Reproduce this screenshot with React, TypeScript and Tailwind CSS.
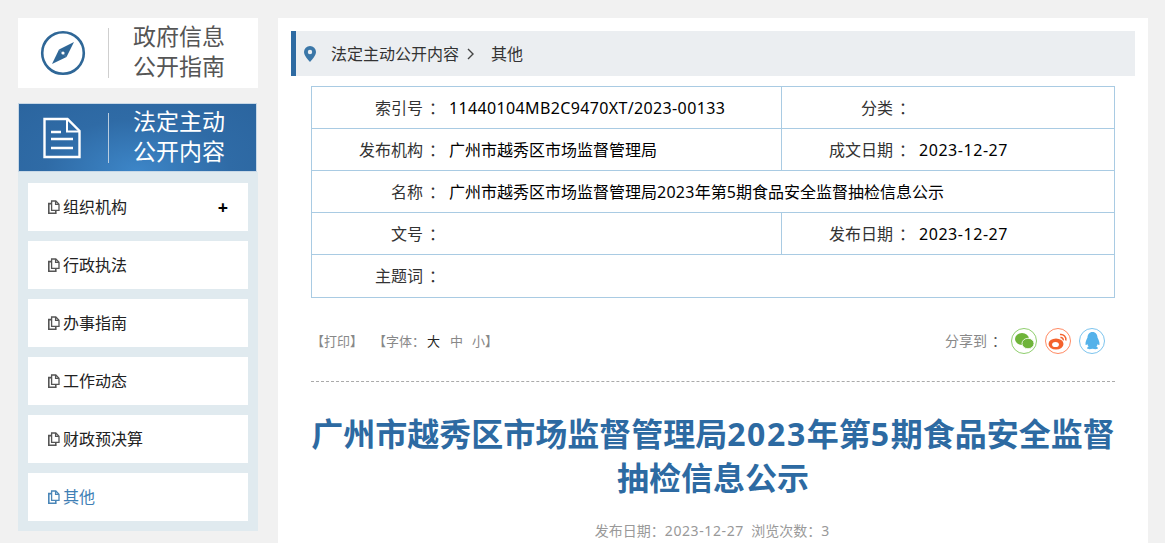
const font = { fontFamily: '"Noto Sans", "Noto Sans CJK SC", sans-serif' };

const navs = ["组织机构", "行政执法", "办事指南", "工作动态", "财政预决算", "其他"];

const CopyIcon = ({ color }: { color: string }) => (
  <svg width="12" height="14" viewBox="0 0 12 14" fill="none" stroke={color} strokeWidth="1.3" className="shrink-0">
    <path d="M3.6 1h4.2L11 4.2V10.4H3.6z" />
    <path d="M7.6 1v3.4H11" />
    <path d="M3.4 3.6H.8v9.6h7V10.6" strokeWidth="1.6" />
  </svg>
);

const Compass = () => (
  <svg width="46" height="46" viewBox="0 0 46 46" fill="none">
    <circle cx="23" cy="23" r="20.8" stroke="#2f6797" strokeWidth="2.6" />
    <path d="M34 12 L26.5 27 L19 19.5 Z" fill="#2f6797" />
    <path d="M12 34 L19 19.5 L26.5 27 Z" fill="#2f6797" />
    <circle cx="23" cy="23" r="1.6" fill="#fff" />
  </svg>
);

const DocIcon = () => (
  <svg width="38" height="42" viewBox="0 0 38 42" fill="none" stroke="#fff" strokeWidth="2.4">
    <path d="M1.500 2h23l12 12v26h-35z" />
    <path d="M24 2v12.500h12.500" strokeWidth="2" />
    <path d="M8 15h10M8 22h22M8 31h22" />
  </svg>
);

const Row = ({ children, last }: { children: React.ReactNode; last?: boolean }) => (
  <div className={`flex h-[42px] items-center ${last ? "" : "border-b border-[#a9cbe3]"}`}>{children}</div>
);

const Label = ({ text }: { text: string }) => (
  <div className="flex w-[127px] shrink-0 justify-end">
    <span>{text}</span>
    <span className="w-4 whitespace-nowrap pl-[6px]">：</span>
  </div>
);

export default function App() {
  return (
    <div className="flex h-[543px] items-start gap-5 overflow-hidden bg-[#f1f1f1] pl-[18px] pt-[18px]" style={font}>
      <div className="w-60 shrink-0">
        <div className="flex h-[70px] items-center bg-white pl-[22px]">
          <Compass />
          <div className="ml-[22px] mr-[24px] h-[50px] w-px bg-[#cfcfcf]" />
          <div className="pb-1 text-[23px] leading-[30px] text-[#555]">政府信息<br />公开指南</div>
        </div>
        <div className="mt-[15px] flex h-[69px] w-[239px] items-center border border-[#c8d8e6] bg-[radial-gradient(ellipse_at_50%_100%,#3d86c8_0%,#2f6ba6_55%,#2b659f_100%)] pl-[24px]">
          <DocIcon />
          <div className="ml-[27px] mr-[24px] h-[50px] w-px bg-[#b9cde0]" />
          <div className="pb-1 text-[23px] leading-[30px] text-white">法定主动<br />公开内容</div>
        </div>
        <div className="flex flex-col gap-[10px] bg-[#e0eaef] px-[10px] pb-[10px] pt-[11px]">
          {navs.map((nav, index) => {
            const active = index === navs.length - 1;
            return (
              <div key={index} className="flex h-12 items-center bg-white px-5 text-base">
                <CopyIcon color={active ? "#4a86b8" : "#555"} />
                <span className={`ml-[4px] -translate-x-px ${active ? "text-[#3f7fb5]" : "text-[#222]"}`}>{nav}</span>
                {index === 0 && <span className="ml-auto text-lg font-bold leading-none text-black">+</span>}
              </div>
            );
          })}
        </div>
      </div>

      <div className="h-[600px] w-[870px] shrink-0 bg-white px-[13px] pt-[13px]">
        <div className="flex h-[45px] items-center border-l-[5px] border-[#2d6aa2] bg-[#ebeef1] pl-[8px] text-base text-[#333]">
          <svg width="12" height="16" viewBox="0 0 12 16" fill="#3b77a8">
            <path fillRule="evenodd" d="M6 0a6 6 0 0 1 6 6c0 3.6-4 7.6-6 10C4 13.6 0 9.6 0 6a6 6 0 0 1 6-6zm0 3.8a2.2 2.2 0 1 0 0 4.4 2.2 2.2 0 0 0 0-4.4z" />
          </svg>
          <span className="ml-[15px]">法定主动公开内容</span>
          <svg width="10" height="12" viewBox="0 0 10 12" fill="none" stroke="#444" strokeWidth="1.4" className="ml-[7px]">
            <path d="M2 1l5 5-5 5" />
          </svg>
          <span className="ml-[15px]">其他</span>
        </div>

        <div className="ml-5 mr-[20px] mt-[10px] border border-[#a9cbe3] text-base text-[#333]">
          <Row>
            <Label text="索引号" />
            <div className="ml-[10px] w-[332px] tracking-[0.36px] text-black">11440104MB2C9470XT/2023-00133</div>
            <div className="flex h-full items-center border-l border-[#a9cbe3]">
              <Label text="分类" />
            </div>
          </Row>
          <Row>
            <Label text="发布机构" />
            <div className="ml-[10px] w-[332px] text-black">广州市越秀区市场监督管理局</div>
            <div className="flex h-full items-center border-l border-[#a9cbe3]">
              <Label text="成文日期" />
              <div className="ml-[10px] tracking-[0.55px] text-black">2023-12-27</div>
            </div>
          </Row>
          <Row>
            <Label text="名称" />
            <div className="ml-[10px] text-black">
              广州市越秀区市场监督管理局<span className="tracking-[0.25px]">2023</span>年第<span className="tracking-[0.25px]">5</span>期食品安全监督抽检信息公示
            </div>
          </Row>
          <Row>
            <Label text="文号" />
            <div className="ml-[10px] w-[332px]" />
            <div className="flex h-full items-center border-l border-[#a9cbe3]">
              <Label text="发布日期" />
              <div className="ml-[10px] tracking-[0.55px] text-black">2023-12-27</div>
            </div>
          </Row>
          <Row last>
            <Label text="主题词" />
          </Row>
        </div>

        <div className="ml-5 mr-[20px] mt-[28px] flex h-[56px] items-start justify-between border-b border-dashed border-[#aaa] text-[13px] text-[#888]">
          <div className="flex h-[32px] items-center">
            <span>【打印】</span>
            <span className="ml-[10px]">【字体：</span>
            <span className="ml-[2px] text-[#222]">大</span>
            <span className="ml-[10px]">中</span>
            <span className="ml-[9px]">小】</span>
          </div>
          <div className="mr-[10px] flex h-[30px] items-center">
            <span className="text-sm">分享到</span>
            <span className="w-[14px] whitespace-nowrap pl-[5px] text-sm text-[#555]">：</span>
            <span className="ml-[10px] flex h-[26px] w-[26px] items-center justify-center rounded-full border border-[#8fce6d]">
              <svg width="19" height="16" viewBox="0 0 19 16" fill="#6fb43a">
                <ellipse cx="7" cy="6" rx="7" ry="6" />
                <ellipse cx="13" cy="10.500" rx="6" ry="5.200" stroke="#fff" strokeWidth="0.8" />
              </svg>
            </span>
            <span className="ml-2 flex h-[26px] w-[26px] items-center justify-center rounded-full border border-[#ff8a63]">
              <svg width="20" height="17" viewBox="0 0 20 17" fill="none">
                <ellipse cx="8" cy="11" rx="7.500" ry="5.500" fill="#f4622d" />
                <ellipse cx="7.500" cy="11.500" rx="3.400" ry="2.600" fill="#fff" />
                <path d="M12 1.500c3.600-.6 6.600 2.400 5.800 6M12.400 4.600c1.800-.3 3.200 1.100 2.800 2.800" stroke="#f4622d" strokeWidth="1.500" />
              </svg>
            </span>
            <span className="ml-2 flex h-[26px] w-[26px] items-center justify-center rounded-full border border-[#7cc4ee]">
              <svg width="15" height="18" viewBox="0 0 15 18" fill="#55b2ea">
                <path d="M7.500 0c3.300 0 4.900 2.600 5 5.600.9 1.600 2.200 4.400 2 7-.3 1-1.200.4-1.800-.6-.2 1-.7 1.900-1.400 2.600 1 .4 1.600 1 1.500 1.700-.2 1.100-3 1.100-5.300.5-2.300.6-5.100.6-5.300-.5-.1-.7.5-1.300 1.500-1.700-.7-.7-1.200-1.600-1.400-2.600-.6 1-1.500 1.600-1.800.6-.2-2.600 1.100-5.400 2-7C2.600 2.600 4.200 0 7.500 0z" />
              </svg>
            </span>
          </div>
        </div>

        <h1 className="mx-5 mt-[30px] text-center text-[32px] font-bold leading-[44px] text-[#2d6aa2]">
          广州市越秀区市场监督管理局<span className="tracking-[1.6px]">2023</span>年第<span className="tracking-[1.6px]">5</span>期食品安全监督
          <br />
          抽检信息公示
        </h1>
        <div className="mt-[21px] pr-[2px] text-center text-sm text-[#999]">
          发布日期：<span className="tracking-[0.6px]">2023-12-27</span>&nbsp;&nbsp;浏览次数：3
        </div>
      </div>
    </div>
  );
}
